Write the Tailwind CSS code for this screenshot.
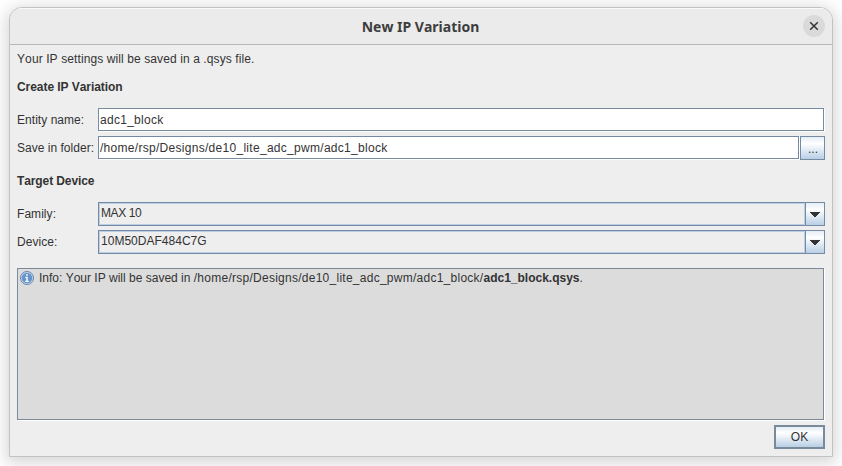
<!DOCTYPE html>
<html lang="en">
<head>
<meta charset="utf-8">
<title>New IP Variation</title>
<script src="https://cdn.jsdelivr.net/npm/@tailwindcss/browser@4"></script>
</head>
<body class="h-[466px] w-[842px] overflow-hidden bg-white pl-[9px] pt-[7px] font-['Liberation_Sans',Arial,sans-serif] text-[12px] leading-[14px] text-[#333333] [font-kerning:none]">
<main class="flex h-[450px] w-[824px] flex-col overflow-hidden rounded-t-[13px] border border-[#c2c2c2] bg-[#eeeeee] shadow-[0_3px_16px_3px_rgba(0,0,0,0.16)]">
  <header class="grid h-[37px] shrink-0 grid-cols-[1fr_auto_1fr] items-center border-b border-[#b8b8b8] bg-[#ebebeb] pr-[7px] shadow-[inset_0_1px_0_#fafafa]">
    <span></span>
    <h1 class="pl-[6px] pt-px font-['Noto_Sans',sans-serif] text-[14px] font-bold leading-[18px] text-[#3d3d3d]">New IP Variation</h1>
    <button class="flex size-[22px] items-center justify-center justify-self-end rounded-full bg-[#dadada]" aria-label="Close">
      <svg class="size-[10px]" viewBox="0 0 10 10" fill="none" stroke="#333" stroke-width="1.5"><path d="M1.200 1.200 8.800 8.800M8.800 1.200 1.200 8.800"/></svg>
    </button>
  </header>

  <div class="flex flex-1 flex-col px-[7px] pt-[7px]">
    <p class="h-[28px] tracking-[0.1px]">Your IP settings will be saved in a .qsys file.</p>
    <h2 class="h-[28px] font-bold tracking-[-0.06px]">Create IP Variation</h2>

    <div class="flex h-[28px]">
      <label class="w-[81px] shrink-0 pt-[5px] tracking-[0.04px]">Entity name:</label>
      <div class="mr-px h-[23px] flex-1 border border-[#768aa1] bg-white pl-px pt-[4px] tracking-[0.28px] shadow-[1px_1px_0_#fff]">adc1_block</div>
    </div>
    <div class="flex h-[38px]">
      <label class="w-[81px] shrink-0 whitespace-nowrap pt-[5px] tracking-[0.02px]">Save in folder:</label>
      <div class="mr-px h-[23px] flex-1 border border-[#768aa1] bg-white pl-px pt-[4px] tracking-[0.29px] shadow-[1px_1px_0_#fff]">/home/rsp/Designs/de10_lite_adc_pwm/adc1_block</div>
      <button class="flex h-[24px] w-[25px] items-end justify-center border border-[#768aa1] bg-linear-to-b from-[#e4edf5] via-white via-30% to-[#b8cfe5] pb-[3px] pl-px">...</button>
    </div>

    <h2 class="h-[28px] font-bold tracking-[-0.1px]">Target Device</h2>

    <div class="flex h-[28px]">
      <label class="w-[81px] shrink-0 pt-[5px] tracking-[0.05px]">Family:</label>
      <div class="flex h-[24px] flex-1 border border-[#768aa1]">
        <div class="flex-1 border border-[#b8cfe5] pl-px pt-[2px] tracking-[-0.4px]">MAX 10</div>
        <div class="flex w-[19px] items-center justify-center border-l border-[#768aa1] bg-linear-to-b from-[#e4edf5] via-white via-30% to-[#b8cfe5]">
          <svg class="h-[5px] w-[10px]" viewBox="0 0 10 5" shape-rendering="crispEdges"><path d="M0 0h10v1H9v1H8v1H7v1H6v1H4V4H3V3H2V2H1V1H0z" fill="#333"/></svg>
        </div>
      </div>
    </div>
    <div class="flex h-[38px]">
      <label class="w-[81px] shrink-0 pt-[5px] tracking-[0.05px]">Device:</label>
      <div class="flex h-[24px] flex-1 border border-[#768aa1]">
        <div class="flex-1 border border-[#b8cfe5] pl-px pt-[2px] tracking-[0.02px]">10M50DAF484C7G</div>
        <div class="flex w-[19px] items-center justify-center border-l border-[#768aa1] bg-linear-to-b from-[#e4edf5] via-white via-30% to-[#b8cfe5]">
          <svg class="h-[5px] w-[10px]" viewBox="0 0 10 5" shape-rendering="crispEdges"><path d="M0 0h10v1H9v1H8v1H7v1H6v1H4V4H3V3H2V2H1V1H0z" fill="#333"/></svg>
        </div>
      </div>
    </div>

    <section class="mr-px flex h-[152px] shrink-0 items-start border border-[#7a8a99] bg-[#dcdcdc] pl-[2px] pt-[2px] shadow-[1px_1px_0_#fff]">
      <svg class="mr-[5px] size-[14px] shrink-0" viewBox="0 0 14 14">
        <circle cx="7" cy="7" r="6.500" fill="#c9d9ea" stroke="#6483ad"/>
        <circle cx="7" cy="7" r="5.200" fill="#6594cb"/>
        <path d="M6.100 3.200h1.800v1.500H6.100zM5.300 5.800h2.500v4h1V11H5.200V9.800h1V7h-.9z" fill="#f4f8fc"/>
      </svg>
      <p class="whitespace-pre"><span>Info: Your IP will be saved in </span><span class="tracking-[0.26px]">/home/rsp/Designs/de10_lite_adc_pwm/adc1_block/</span><b>adc1_block.qsys</b>.</p>
    </section>

    <footer class="flex justify-end pt-[5px]">
      <button class="h-[24px] w-[51px] border-2 border-[#7a8a99] bg-linear-to-b from-[#e4edf5] via-white via-30% to-[#b8cfe5]">OK</button>
    </footer>
  </div>
</main>
</body>
</html>
